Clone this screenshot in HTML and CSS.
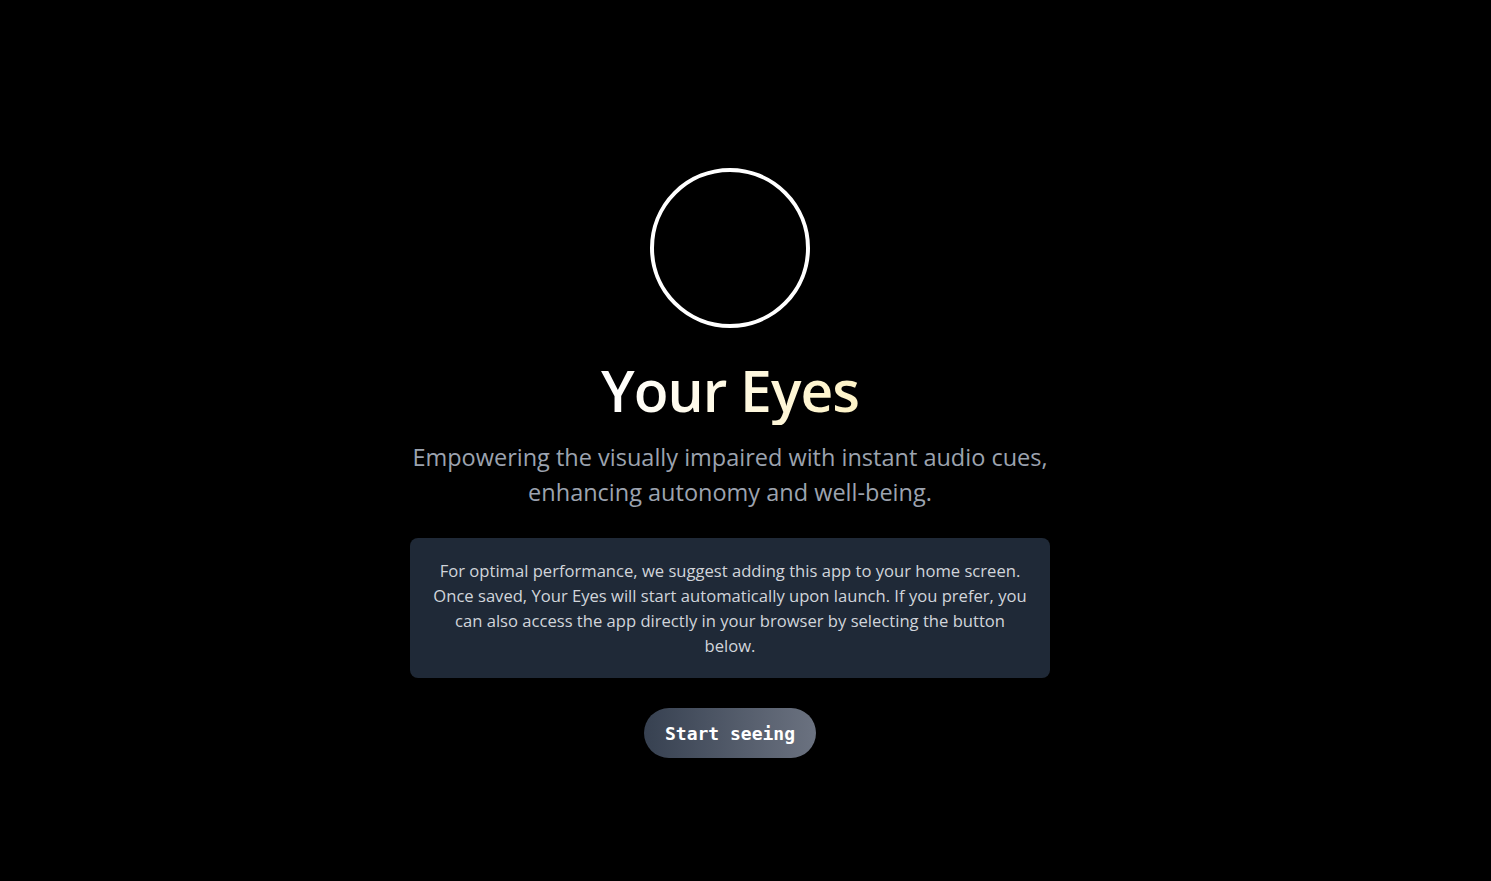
FILE: index.html
```html
<!DOCTYPE html>
<html lang="en">
<head>
<meta charset="utf-8">
<title>Your Eyes</title>
<link rel="stylesheet" href="styles.css">
</head>
<body>
<main class="page">
  <div class="ring" aria-hidden="true"></div>
  <h1 class="title">Your Eyes</h1>
  <p class="subtitle">Empowering the visually impaired with instant audio cues,<br>enhancing autonomy and well-being.</p>
  <div class="notice">For optimal performance, we suggest adding this app to your home screen. Once saved, Your Eyes will start automatically upon launch. If you prefer, you can also access the app directly in your browser by selecting the button below.</div>
  <button class="start" type="button">Start seeing</button>
</main>
</body>
</html>
```
FILE: styles.css
```css
html, body {
  margin: 0;
  padding: 0;
  background: #000;
  height: 100%;
}
body {
  font-family: "Open Sans", "Noto Sans", sans-serif;
}
.page {
  box-sizing: border-box;
  min-height: 100%;
  display: flex;
  flex-direction: column;
  align-items: center;
  padding: 168px 31px 0 0;
}
.ring {
  width: 160px;
  height: 160px;
  box-sizing: border-box;
  border: 4px solid #fff;
  border-radius: 50%;
}
.title {
  margin: 27px 0 0;
  font-size: 57px;
  line-height: 70px;
  font-weight: 600;
  letter-spacing: -1px;
  background: linear-gradient(90deg, #ffffff 0%, #fef3c7 100%);
  -webkit-background-clip: text;
  background-clip: text;
  color: transparent;
}
.subtitle {
  margin: 15px 0 0;
  font-size: 23.5px;
  line-height: 35px;
  color: #9ca3af;
  text-align: center;
  font-weight: 400;
}
.notice {
  box-sizing: border-box;
  margin-top: 28px;
  width: 640px;
  padding: 20px 22px;
  background: #1f2937;
  border-radius: 8px;
  color: #d1d5db;
  font-size: 16.6px;
  line-height: 25px;
  text-align: center;
}
.start {
  margin-top: 30px;
  width: 172px;
  height: 50px;
  border: 0;
  border-radius: 25px;
  background: linear-gradient(90deg, #374151 0%, #6b7280 100%);
  color: #fff;
  font-family: "DejaVu Sans Mono", "Liberation Mono", monospace;
  font-weight: 700;
  font-size: 18px;
  cursor: pointer;
}
```
